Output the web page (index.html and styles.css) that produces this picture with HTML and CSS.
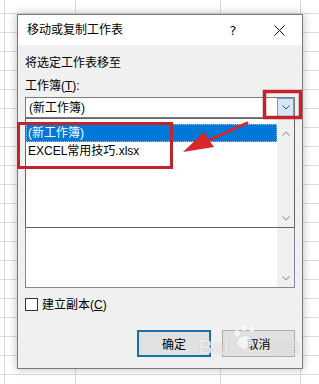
FILE: index.html
```html
<!DOCTYPE html>
<html lang="zh-CN">
<head>
<meta charset="utf-8">
<title>移动或复制工作表</title>
<link rel="stylesheet" href="styles.css">
</head>
<body>
<div class="dialog">
  <div class="titlebar">
    <span class="title">移动或复制工作表</span>
    <span class="tb-btn help">?</span>
    <span class="tb-btn close">
      <svg width="11" height="11" viewBox="0 0 11 11"><path d="M0.5 0.5 L10.5 10.5 M10.5 0.5 L0.5 10.5" stroke="#111" stroke-width="1" fill="none"/></svg>
    </span>
  </div>
  <div class="body">
    <div class="label l1">将选定工作表移至</div>
    <div class="label l2">工作簿(<u>T</u>):</div>
    <div class="combo-area">
      <div class="combo">
        <span class="combo-text">(新工作簿)</span>
        <span class="combo-btn">
          <svg width="8" height="5" viewBox="0 0 8 5"><path d="M0.5 0.5 L4 4 L7.5 0.5" stroke="#505050" stroke-width="1" fill="none"/></svg>
        </span>
      </div>
      <div class="listbox">
        <div class="sb sb-list">
          <span class="arrow"><svg width="8" height="5" viewBox="0 0 8 5"><path d="M0.5 0.5 L4 4 L7.5 0.5" stroke="#a8a8a8" stroke-width="1.2" fill="none"/></svg></span>
        </div>
      </div>
      <div class="dropdown">
        <div class="items">
          <div class="item sel">(新工作簿)</div>
          <div class="item">EXCEL常用技巧.xlsx</div>
        </div>
        <div class="sb sb-drop">
          <span class="arrow"><svg width="8" height="5" viewBox="0 0 8 5"><path d="M0.5 4.5 L4 1 L7.5 4.5" stroke="#a8a8a8" stroke-width="1.2" fill="none"/></svg></span>
          <span class="arrow"><svg width="8" height="5" viewBox="0 0 8 5"><path d="M0.5 0.5 L4 4 L7.5 0.5" stroke="#a8a8a8" stroke-width="1.2" fill="none"/></svg></span>
        </div>
      </div>
    </div>
    <div class="check"><span class="box"></span><span>建立副本(<u>C</u>)</span></div>
    <div class="buttons">
      <button class="btn primary">确定</button>
      <button class="btn">取消</button>
    </div>
  </div>
</div>

<svg class="annot" width="319" height="384" viewBox="0 0 319 384">
  <rect x="18.5" y="123.5" width="153" height="44" fill="none" stroke="#c3232b" stroke-width="3"/>
  <rect x="264.5" y="91.5" width="36" height="26" fill="none" stroke="#c3232b" stroke-width="3.5"/>
  <line x1="247" y1="123" x2="207" y2="141" stroke="#d9262a" stroke-width="3" stroke-linecap="round"/>
  <polygon points="183,152 204,132 209,140 214,147" fill="#d9262a"/>
</svg>

<div class="watermark">
  <span class="wm-bai">Bai</span>
  <span class="wm-paw">
    <i class="toe t1"></i><i class="toe t2"></i><i class="toe t3"></i><i class="pad"></i>
  </span>
  <span class="wm-jy">经验</span>
</div>
</body>
</html>
```

FILE: styles.css
```css
html, body {
  margin: 0;
  padding: 0;
}

body {
  width: 319px;
  height: 384px;
  overflow: hidden;
  position: relative;
  background-color: #ffffff;
  background-image:
    linear-gradient(#d8d8d8, #d8d8d8),
    linear-gradient(#d8d8d8, #d8d8d8),
    linear-gradient(#d8d8d8, #d8d8d8),
    linear-gradient(#d8d8d8, #d8d8d8),
    linear-gradient(to bottom, #dcdcdc 0, #dcdcdc 1px, transparent 1px);
  background-size: 1px 100%, 1px 100%, 1px 100%, 1px 100%, 100% 19px;
  background-position: 4px 0, 75px 0, 220px 0, 300px 0, 0 13px;
  background-repeat: no-repeat, no-repeat, no-repeat, no-repeat, repeat;
  font-family: "Liberation Sans", "Noto Sans CJK SC", sans-serif;
  font-size: 12px;
  color: #000;
}

.dialog {
  box-sizing: border-box;
  width: 286px;
  height: 355px;
  margin: 14px 0 0 17px;
  border: 1px solid #7c7c7c;
  background: #f0f0f0;
  box-shadow: 0 0 9px rgba(0, 0, 0, 0.28);
  display: flex;
  flex-direction: column;
}

.titlebar {
  height: 30px;
  background: #ffffff;
  display: flex;
  align-items: center;
  padding-left: 9px;
}

.title {
  flex: 1;
  font-size: 12px;
  line-height: 16px;
}

.tb-btn {
  width: 46px;
  height: 30px;
  display: flex;
  align-items: center;
  justify-content: center;
}

.help {
  font-size: 13px;
  font-family: "DejaVu Sans", sans-serif;
  color: #111;
}

.body {
  flex: 1;
  padding: 10px 7px 11px;
  display: flex;
  flex-direction: column;
}

.label {
  line-height: 16px;
  height: 16px;
  white-space: nowrap;
}

.l2 {
  margin-top: 7px;
}

.combo-area {
  margin-top: 3px;
  position: relative;
  display: flex;
  flex-direction: column;
}

.combo {
  box-sizing: border-box;
  height: 21px;
  border: 1px solid #7a7a7a;
  background: #fff;
  display: flex;
  align-items: center;
}

.combo-text {
  flex: 1;
  padding-left: 3px;
  line-height: 16px;
}

.combo-btn {
  box-sizing: border-box;
  width: 17px;
  height: 19px;
  background: #d3e7f8;
  border: 1px solid #6f9ed1;
  display: flex;
  align-items: center;
  justify-content: center;
}

.listbox {
  box-sizing: border-box;
  margin-top: 4px;
  height: 166px;
  border: 1px solid #828790;
  background: #fff;
  display: flex;
  justify-content: flex-end;
}

.sb {
  width: 17px;
  background: #f0f0f0;
  display: flex;
  flex-direction: column;
}

.sb-list {
  justify-content: flex-end;
}

.arrow {
  height: 17px;
  display: flex;
  align-items: center;
  justify-content: center;
}

.dropdown {
  position: absolute;
  top: 21px;
  left: 0;
  right: 0;
  box-sizing: border-box;
  height: 110px;
  border: 1px solid #646464;
  background: #fff;
  display: flex;
}

.items {
  flex: 1;
  padding-top: 5px;
}

.item {
  height: 18px;
  line-height: 18px;
  padding-left: 2px;
  white-space: nowrap;
}

.item.sel {
  background: #0078d7;
  color: #fff;
  outline: 1px dotted #9cc8ee;
  outline-offset: -1px;
}

.sb-drop {
  padding-top: 6px;
  justify-content: space-between;
}

.check {
  margin-top: 10px;
  height: 13px;
  display: flex;
  align-items: center;
  line-height: 16px;
}

.box {
  box-sizing: border-box;
  width: 13px;
  height: 13px;
  border: 1px solid #333;
  background: #fff;
  margin-right: 4px;
}

.buttons {
  margin-top: 19px;
  display: flex;
  justify-content: flex-end;
  gap: 11px;
}

.btn {
  box-sizing: border-box;
  width: 73px;
  height: 27px;
  background: #e1e1e1;
  border: 1px solid #adadad;
  font-family: "Liberation Sans", "Noto Sans CJK SC", sans-serif;
  font-size: 12px;
  color: #000;
  padding: 0;
  margin: 0;
}

.btn.primary {
  width: 74px;
  border: 2px solid #1a6fae;
}

.annot {
  position: absolute;
  top: 0;
  left: 0;
  pointer-events: none;
}

.watermark {
  position: absolute;
  left: 198px;
  top: 322px;
  width: 110px;
  height: 40px;
  pointer-events: none;
}

.wm-bai {
  position: absolute;
  left: 0;
  top: 14px;
  font-family: "Liberation Sans", sans-serif;
  font-weight: bold;
  font-size: 20px;
  line-height: 22px;
  color: rgba(250, 250, 250, 0.75);
  text-shadow: 0 0 1px rgba(150, 150, 150, 0.6);
}

.wm-paw {
  position: absolute;
  left: 34px;
  top: 0;
  width: 28px;
  height: 30px;
}

.toe, .pad {
  position: absolute;
  display: block;
  border-radius: 50%;
  background: rgba(250, 250, 250, 0.75);
  box-shadow: 0 0 1px rgba(150, 150, 150, 0.6);
}

.t1 { left: 2px; top: 8px; width: 6px; height: 7px; }
.t2 { left: 9px; top: 2px; width: 6px; height: 7px; }
.t3 { left: 17px; top: 3px; width: 6px; height: 7px; }
.pad { left: 5px; top: 14px; width: 16px; height: 13px; }

.wm-jy {
  position: absolute;
  left: 72px;
  top: 16px;
  font-family: "Noto Sans CJK SC", sans-serif;
  font-size: 15px;
  line-height: 18px;
  color: rgba(250, 250, 250, 0.7);
  text-shadow: 0 0 1px rgba(150, 150, 150, 0.6);
}
```
